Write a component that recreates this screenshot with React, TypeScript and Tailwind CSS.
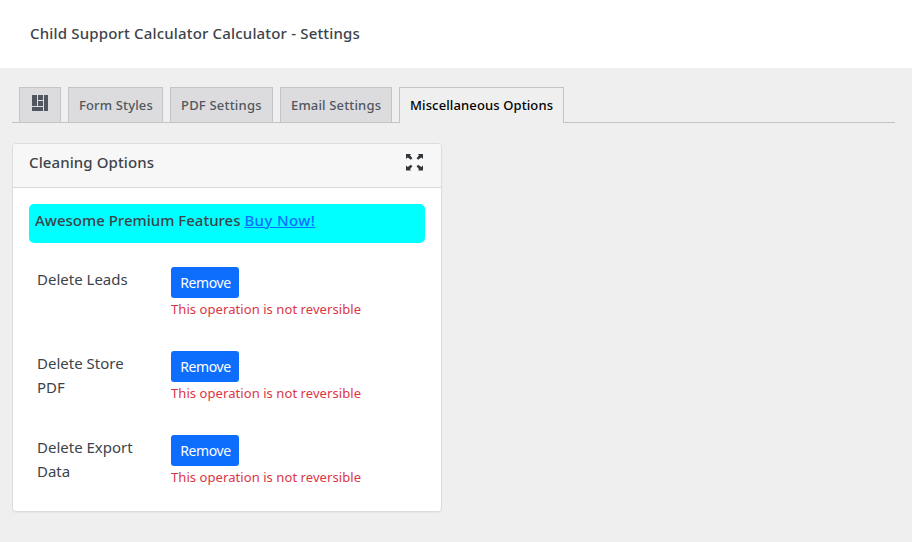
type Tab = { label: string; width: string; tracking: string };

const tabs: Tab[] = [
  { label: 'Form Styles', width: 'w-[95px]', tracking: 'tracking-[0.15px]' },
  { label: 'PDF Settings', width: 'w-[103px]', tracking: 'tracking-[0.2px]' },
  { label: 'Email Settings', width: 'w-[112px]', tracking: 'tracking-[0.15px]' },
];

const rows = ['Delete Leads', 'Delete Store PDF', 'Delete Export Data'];

function DashboardIcon() {
  return (
    <svg width="16" height="16" viewBox="0 0 16 16" fill="#50575e" shapeRendering="crispEdges">
      <path d="M0 0h5v11H0zM6 0h5v5H6zM6 6h5v5H6zM12 0h4v16h-4zM0 12h11v4H0z" />
    </svg>
  );
}

function ExpandIcon() {
  return (
    <svg width="17" height="17" viewBox="0 0 17 17" fill="#32373c">
      <path d="M0 0h5L4 1.300l2.400 3-1.500 1.500-3.200-2.300L0 5z" />
      <path d="M17 0h-5l1 1.300-2.400 3 1.500 1.500 3.200-2.300L17 5z" />
      <path d="M0 16.500h5l-1-1.300 2.400-3-1.500-1.500-3.200 2.300L0 11.500z" />
      <path d="M17 16.500h-5l1-1.300-2.400-3 1.500-1.500 3.200 2.300L17 11.500z" />
    </svg>
  );
}

export default function App() {
  return (
    <div className="h-[542px] w-[912px] overflow-hidden bg-[#efefef] font-['Noto_Sans',sans-serif] whitespace-nowrap text-[#3c434a]">
      <header className="h-[68px] bg-white pt-[21px] pl-[30px]">
        <h1 className="text-[15px] leading-[24px] font-medium tracking-[0.17px]">
          Child Support Calculator Calculator - Settings
        </h1>
      </header>

      <nav className="mt-[19px] ml-3 flex h-9 w-[883px] gap-[7px] border-b border-[#c3c4c7] pl-[7px]">
        <button className="flex h-[35px] w-[42px] justify-center border border-b-0 border-[#c3c4c7] bg-[#dcdcde] pt-[7px]">
          <DashboardIcon />
        </button>
        {tabs.map((tab) => (
          <button
            key={tab.label}
            className={`h-[35px] border border-b-0 border-[#c3c4c7] bg-[#dcdcde] pl-[10px] text-left text-[13px] leading-[34px] font-medium text-[#50575e] ${tab.width} ${tab.tracking}`}
          >
            {tab.label}
          </button>
        ))}
        <button className="h-9 w-[165px] border border-b-0 border-[#c3c4c7] bg-[#efefef] pb-px pl-[10px] text-left text-[13px] leading-[34px] font-medium tracking-[0.12px] text-black">
          Miscellaneous Options
        </button>
      </nav>

      <section className="mt-5 ml-3 h-[369px] w-[430px] rounded-[4px] border border-[#dcdcde] bg-white shadow-[0_1px_1px_rgba(0,0,0,0.04)]">
        <div className="flex h-[44px] justify-between rounded-t-[3px] border-b border-[#d7d7d8] bg-[#f7f7f7] pr-[18px] pl-4">
          <h2 className="pt-[6px] text-[15px] leading-[24px] font-medium tracking-[0.1px]">Cleaning Options</h2>
          <button className="mt-[10px] h-[17px]">
            <ExpandIcon />
          </button>
        </div>
        <div className="px-4 pt-4">
          <div className="h-[39px] rounded-[5px] bg-[#00ffff] pt-[4px] pl-[6px] text-[15px] leading-[24px] font-medium">
            Awesome Premium Features{' '}
            <a className="tracking-[0.4px] text-[#0d6efd] underline" href="#buy">
              Buy Now!
            </a>
          </div>
          <div className="pt-6">
            {rows.map((row) => (
              <div key={row} className="flex h-[84px]">
                <div className="w-[142px] pl-2">
                  <div className="w-[105px] text-[15px] leading-[24px] font-normal whitespace-normal">{row}</div>
                </div>
                <div>
                  <button className="block h-[31px] w-[68px] rounded-[3px] bg-[#0d6efd] pl-px text-center text-[14px] leading-[32px] tracking-[-0.4px] text-white">
                    Remove
                  </button>
                  <div className="text-[13px] leading-[23px] font-normal tracking-[0.07px] text-[#dc3545]">
                    This operation is not reversible
                  </div>
                </div>
              </div>
            ))}
          </div>
        </div>
      </section>
    </div>
  );
}
